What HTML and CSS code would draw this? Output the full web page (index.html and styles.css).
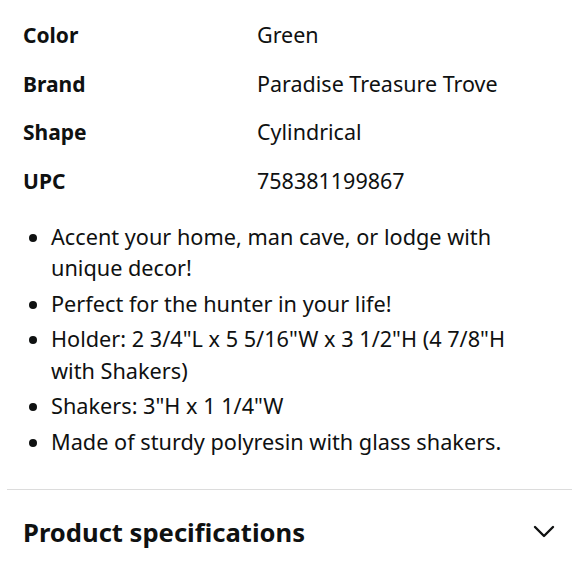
FILE: index.html
```html
<!DOCTYPE html>
<html>
<head>
<meta charset="utf-8">
<link rel="stylesheet" href="styles.css">
</head>
<body>
<div class="page">
  <div class="attrs">
    <div class="row"><span class="label">Color</span><span class="value">Green</span></div>
    <div class="row"><span class="label">Brand</span><span class="value">Paradise Treasure Trove</span></div>
    <div class="row"><span class="label">Shape</span><span class="value">Cylindrical</span></div>
    <div class="row"><span class="label">UPC</span><span class="value">758381199867</span></div>
  </div>
  <ul class="bullets">
    <li>Accent your home, man cave, or lodge with unique decor!</li>
    <li>Perfect for the hunter in your life!</li>
    <li>Holder: 2 3/4"L x 5 5/16"W x 3 1/2"H (4 7/8"H with Shakers)</li>
    <li>Shakers: 3"H x 1 1/4"W</li>
    <li>Made of sturdy polyresin with glass shakers.</li>
  </ul>
  <div class="divider"></div>
  <div class="section">
    <span class="section-title">Product specifications</span>
    <svg class="chevron" width="22" height="14" viewBox="0 0 22 14"><path d="M2 2 L11 11 L20 2" fill="none" stroke="#0f1111" stroke-width="2.4" stroke-linecap="round" stroke-linejoin="round"/></svg>
  </div>
</div>
</body>
</html>
```
FILE: styles.css
```css
html, body { margin: 0; padding: 0; background: #fff; }
body { font-family: "Noto Sans", "DejaVu Sans", sans-serif; color: #0f1111; }
.page { width: 580px; height: 580px; overflow: hidden; }
.attrs { padding: 20px 0 0 23px; }
.row { display: flex; height: 48.7px; align-items: flex-start; font-size: 21px; line-height: 30px; }
.label { width: 234px; font-weight: 700; }
.value { font-weight: 400; font-size: 21.5px; }
.bullets { margin: 6px 0 0 0; padding: 0 70px 0 51px; font-size: 21.7px; line-height: 31.5px; }
.bullets li { margin-bottom: 4px; }
.divider { margin: 32px 8px 0 7px; height: 1px; background: #dcdcdc; }
.section { display: flex; justify-content: space-between; align-items: center; padding: 2px 23px 0 23px; height: 80px; }
.section-title { font-size: 25.6px; font-weight: 700; }
.chevron { margin-right: 2px; }
```
